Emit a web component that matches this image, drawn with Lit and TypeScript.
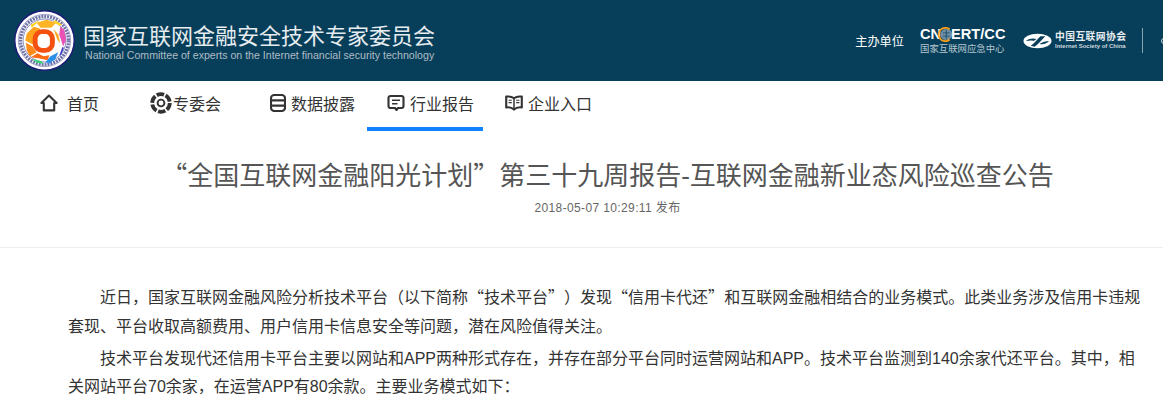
import { LitElement, html, css, svg } from "lit";
import { customElement } from "lit/decorators.js";

const logo = svg`<svg class="logo" viewBox="0 0 62 62" width="61" height="61">
  <circle cx="31" cy="31" r="30.2" fill="#fff" stroke="#1c1a78" stroke-width="1.4"/>
  <circle cx="31" cy="31" r="26.6" fill="none" stroke="#7d7fb0" stroke-width=".7"/>
  <circle cx="31" cy="31" r="24.4" fill="none" stroke="#7173ab" stroke-width="3.4" stroke-dasharray="2 1"/>
  <circle cx="31" cy="31" r="21.8" fill="#fff" stroke="#5a5ca0" stroke-width=".7"/>
  <path d="M23 13 L33 10 L43 13 L38 18 L27 18 Z" fill="#ffb426"/>
  <path d="M42 10.5 L49 15 L46 16 L40 12 Z" fill="#ffd21f"/>
  <path d="M17 15 L26 10.5 L24 12.5 L18 18 Z" fill="#ffd21f"/>
  <path d="M20 17 L27 19 L21 27 L19 35 L11.5 31 L13 24 Z" fill="#ffa21e"/>
  <path d="M12 33 L19 37 L23 43 L16 47 L13 41 Z" fill="#ff8a17"/>
  <path d="M17 48 L24 44 L30 47 L36 46 L34 51 L25 49 Z" fill="#ff6a14"/>
  <path d="M18 49.5 L28 52 L30 55 L23 53.5 Z" fill="#3fd07c"/>
  <path d="M32 53 L37 47 L45 43 L42 50 L36 54.5 Z" fill="#2b90e8"/>
  <path d="M47 17 L51 20 L53 30 L50 37 L46 25 Z" fill="#e952b4"/>
  <path d="M40 19 L45 25 L47 34 L44 30 Z" fill="#f7a823"/>
  <path d="M50 38 L47 46" stroke="#3a35c4" stroke-width="1.6"/>
  <rect x="21.5" y="22" width="17.5" height="19" rx="7" fill="#fff" stroke="#f4500f" stroke-width="5"/>
</svg>`;

const cncert = html`<div class="cncert">
  <div class="cn-top"><span>CN</span><svg class="ring" viewBox="0 0 18 18">
    <circle cx="10" cy="9" r="7" fill="#6d8ea3"/><path d="M14 3 A8 8 0 1 0 14 15" fill="none" stroke="#f39a17" stroke-width="2.2"/>
    <path d="M6 7h8M6 11h8M10 3v12" stroke="#0b3f5c" stroke-width=".8"/></svg><span>ERT/CC</span></div>
  <div class="cn-sub">国家互联网应急中心</div>
</div>`;

const isc = html`<div class="isc">
  <svg viewBox="0 0 30 16" width="29" height="16">
    <ellipse cx="15" cy="8" rx="14.5" ry="7.6" fill="#fff"/>
    <path d="M8 13 C12 10 14 7 18 3 L23 3 C19 7 16 11 12 14 Z" fill="#073f5b"/>
    <path d="M3 8 C7 5 11 5 14 6 L11 8 C8 7 6 8 3 8 Z" fill="#073f5b"/>
    <path d="M17 11 C20 9 24 8 27 8 C24 11 20 12 17 11 Z" fill="#073f5b"/>
  </svg>
  <div class="isc-text"><div class="isc-cn">中国互联网协会</div><div class="isc-en">Internet Society of China</div></div>
</div>`;

const iconHome = svg`<svg class="ic" viewBox="0 0 18 18" width="18" height="18"><path d="M9 1.6 L16.6 9 L14.2 9 L14.2 16.4 L3.8 16.4 L3.8 9 L1.4 9 Z" fill="none" stroke="#333" stroke-width="2.1" stroke-linejoin="round"/></svg>`;
const iconOrg = svg`<svg class="ic" viewBox="0 0 22 22" width="22" height="22">
  <circle cx="11" cy="11" r="8.8" fill="none" stroke="#333" stroke-width="3.8" stroke-dasharray="7.5 1.7"/>
  <circle cx="11" cy="11" r="3.4" fill="none" stroke="#333" stroke-width="1.9"/></svg>`;
const iconData = svg`<svg class="ic" viewBox="0 0 16 18" width="16" height="18"><rect x="1" y="1" width="14" height="16" rx="3.2" fill="none" stroke="#333" stroke-width="2.1"/><path d="M1 6.4H15M1 11.6H15" stroke="#333" stroke-width="2.1"/></svg>`;
const iconReport = svg`<svg class="ic" viewBox="0 0 18 18" width="18" height="18"><path d="M3.5 2 H14.5 A2 2 0 0 1 16.5 4 V12 A2 2 0 0 1 14.5 14 H11 L9.5 16 L8 14 H3.5 A2 2 0 0 1 1.5 12 V4 A2 2 0 0 1 3.5 2 Z" fill="none" stroke="#333" stroke-width="2.1" stroke-linejoin="round"/><path d="M5 6.2H13M5 9.8H10.5" stroke="#333" stroke-width="1.5"/></svg>`;
const iconBook = svg`<svg class="ic" viewBox="0 0 18 18" width="18" height="18"><path d="M9 4.2 C7 2.6 4 2.2 1.2 2.6 V13.4 C4 13 7 13.6 9 15.6 C11 13.6 14 13 16.8 13.4 V2.6 C14 2.2 11 2.6 9 4.2 Z" fill="none" stroke="#333" stroke-width="2.1" stroke-linejoin="round"/><path d="M9 4.2V15.6" stroke="#333" stroke-width="1.5"/><path d="M3.6 6.2H6.8M3.6 8.6H6.8M11.2 6.2H14.4M11.2 8.6H14.4" stroke="#333" stroke-width="1.1"/></svg>`;

const nav = [
  { icon: iconHome, text: "首页" },
  { icon: iconOrg, text: "专委会" },
  { icon: iconData, text: "数据披露" },
  { icon: iconReport, text: "行业报告", active: true },
  { icon: iconBook, text: "企业入口" },
];

const L = html`<span class="q">“</span>`;
const R = html`<span class="q">”</span>`;

@customElement("app-root")
export class AppRoot extends LitElement {
  static styles = css`
    :host { display: block; height: 401px; overflow: hidden; background: #fff; font-family: "Liberation Sans", "Noto Sans CJK SC", sans-serif; color: #333; text-spacing-trim: space-all; }
    .q { font-family: "Noto Sans CJK SC", sans-serif; }
    .top { height: 81px; background: #073f5b; display: flex; align-items: center; padding-left: 14px; overflow: hidden; }
    .logo { flex: none; margin-top: -1px; }
    .brand { margin-left: 8px; width: 360px; flex: none; padding-top: 3px; }
    .brand-cn { font-size: 22px; line-height: 30px; white-space: nowrap; color: #e6ecef; }
    .brand-en { font-size: 10.6px; line-height: 13px; color: #aebcc5; white-space: nowrap; margin-top: -3px; margin-left: 2px; }
    .partners { margin-left: auto; display: flex; align-items: center; color: #fff; flex: none; margin-right: -4px; }
    .host-label { font-size: 12.2px; margin-right: 16px; color: #fff; white-space: nowrap; }
    .cncert { width: 103px; color: #fff; margin-top: 0; }
    .cn-top { display: flex; align-items: center; font-size: 14.6px; line-height: 15px; font-weight: 700; }
    .ring { margin: 0 -2px 0 -3px; width: 15px; height: 15px; }
    .cn-sub { font-size: 9.4px; line-height: 13px; color: #b9c7d0; white-space: nowrap; }
    .isc { display: flex; align-items: center; gap: 3px; width: 119px; }
    .isc-cn { font-size: 9.8px; line-height: 11px; color: #e8edf0; white-space: nowrap; font-weight: 700; letter-spacing: .4px; }
    .isc-en { font-size: 6px; line-height: 8px; color: #cdd8de; white-space: nowrap; font-weight: 700; }
    .sep { width: 1px; height: 25px; background: #8aa3b1; }
    .tail { margin-left: 18px; width: 4px; height: 4px; border: 1px solid #cdd8de; border-radius: 50%; }
    nav { height: 50px; display: flex; padding-left: 20px; }
    .item { height: 50px; box-sizing: border-box; padding-left: 20px; display: flex; align-items: center; font-size: 16px; color: #333; border-bottom: 4px solid transparent; padding-bottom: 3px; flex: none; }
    .item.active { border-bottom-color: #0f82ff; }
    .item:nth-child(1) { width: 110px; gap: 9px; }
    .item:nth-child(2) { width: 120px; gap: 1px; }
    .item:nth-child(3) { width: 117px; gap: 5px; }
    .item:nth-child(4) { width: 116px; gap: 5px; }
    .item:nth-child(5) { width: 120px; gap: 5px; padding-left: 22px; }
    .head { height: 117px; box-sizing: border-box; border-bottom: 1px solid #eee; text-align: center; padding: 23px 0 0 52px; }
    h1 { margin: 0; font-size: 26px; line-height: 40px; font-weight: 400; color: #555; white-space: nowrap; }
    .date { margin-top: 4px; font-size: 12px; line-height: 16px; color: #666; letter-spacing: .37px; }
    .body { padding: 34px 18px 0 68px; }
    p { margin: 0 0 3px; font-size: 16px; line-height: 28.8px; text-indent: 32px; color: #333; }
  `;

  render() {
    return html`
      <header class="top">
        ${logo}
        <div class="brand">
          <div class="brand-cn">国家互联网金融安全技术专家委员会</div>
          <div class="brand-en">National Committee of experts on the Internet financial security technology</div>
        </div>
        <div class="partners">
          <span class="host-label">主办单位</span>
          ${cncert}
          ${isc}
          <span class="sep"></span>
          <span class="tail"></span>
        </div>
      </header>
      <nav>
        ${nav.map((n) => html`<div class="item ${n.active ? "active" : ""}">${n.icon}<span>${n.text}</span></div>`)}
      </nav>
      <section class="head">
        <h1>${L}全国互联网金融阳光计划${R}第三十九周报告-互联网金融新业态风险巡查公告</h1>
        <div class="date">2018-05-07 10:29:11 发布</div>
      </section>
      <section class="body">
        <p>近日，国家互联网金融风险分析技术平台（以下简称${L}技术平台${R}）发现${L}信用卡代还${R}和互联网金融相结合的业务模式。此类业务涉及信用卡违规<br />套现、平台收取高额费用、用户信用卡信息安全等问题，潜在风险值得关注。</p>
        <p>技术平台发现代还信用卡平台主要以网站和APP两种形式存在，并存在部分平台同时运营网站和APP。技术平台监测到140余家代还平台。其中，相关网站平台70余家，在运营APP有80余款。主要业务模式如下：</p>
      </section>
    `;
  }
}
